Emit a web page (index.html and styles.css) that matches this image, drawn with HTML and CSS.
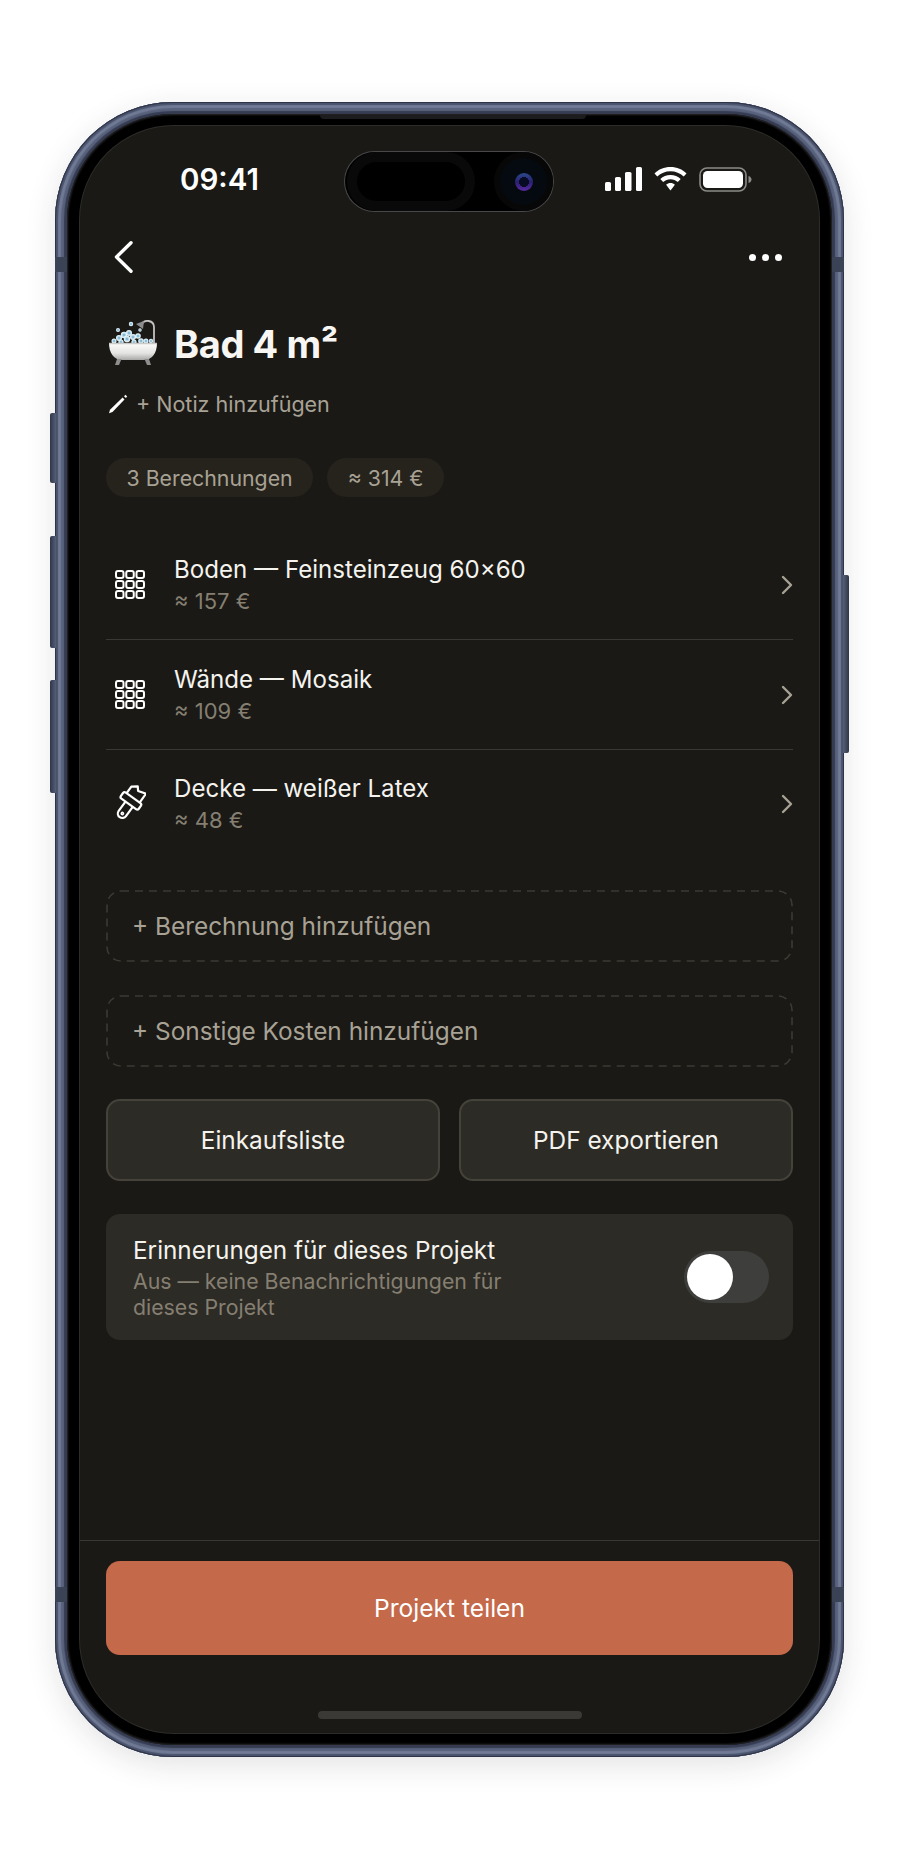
FILE: index.html
```html
<!DOCTYPE html>
<html lang="de">
<head>
<meta charset="utf-8">
<title>Bad 4 m²</title>
<link rel="stylesheet" href="styles.css">
</head>
<body>
<div class="phone">
  <span class="side side-l1"></span>
  <span class="side side-l2"></span>
  <span class="side side-l3"></span>
  <span class="side side-r1"></span>
  <span class="band band-tl"></span>
  <span class="band band-tr"></span>
  <span class="band band-bl"></span>
  <span class="band band-br"></span>
  <div class="bezel">
    <span class="lip"></span>
    <div class="screen">
      <div class="island">
        <span class="sensor"></span>
        <span class="lens-ring"><span class="lens"></span></span>
      </div>
      <div class="status">
        <span class="time">09:41</span>
        <div class="status-icons">
          <svg class="i-signal" width="37" height="24" viewBox="0 0 37 24"><rect x="0" y="15" width="6" height="9" rx="1.6"/><rect x="10" y="10" width="6" height="14" rx="1.6"/><rect x="20" y="5" width="6.500" height="19" rx="1.6"/><rect x="31" y="0" width="6" height="24" rx="1.6"/></svg>
          <svg class="i-wifi" width="33" height="24" viewBox="0 0 33 24"><path d="M16.5 0C10 0 4.700 2.400 0.500 6.400L3.300 9.500C6.800 6.200 11.400 4.200 16.500 4.200S26.200 6.200 29.700 9.500L32.500 6.400C28.300 2.400 23 0 16.500 0Z"/><path d="M16.500 8C12.500 8 9 9.500 6.300 12L9.200 15.100C11.100 13.300 13.700 12.200 16.500 12.200S21.900 13.300 23.800 15.100L26.700 12C24 9.500 20.500 8 16.500 8Z"/><path d="M16.500 16C14.800 16 13.300 16.600 12.100 17.700L16.500 23.500L20.900 17.700C19.700 16.600 18.200 16 16.500 16Z"/></svg>
          <svg class="i-batt" width="53" height="25" viewBox="0 0 53 25"><rect x="1" y="1" width="46" height="23" rx="7" fill="none" stroke="#8b8a87" stroke-width="1.600"/><rect x="4" y="4" width="40" height="17" rx="4.500" fill="#fff"/><path d="M49.500 9c2 .5 3 2 3 3.500s-1 3-3 3.500z" fill="#8b8a87"/></svg>
        </div>
      </div>
      <div class="nav">
        <svg class="back" width="20" height="32" viewBox="0 0 20 32"><path d="M17 1.800L2.500 16L17 30.200" fill="none" stroke="#fff" stroke-width="3.400" stroke-linecap="round" stroke-linejoin="round"/></svg>
        <div class="dots"><span></span><span></span><span></span></div>
      </div>
      <div class="title-row">
        <svg class="bath" width="50" height="48" viewBox="0 0 50 48">
          <defs>
            <linearGradient id="tub" x1="0" y1="0" x2="0" y2="1"><stop offset="0" stop-color="#fdfdfd"/><stop offset=".6" stop-color="#e4e4e2"/><stop offset="1" stop-color="#a8a8a6"/></linearGradient>
            <radialGradient id="bub"><stop offset="0" stop-color="#5f9fc0"/><stop offset=".6" stop-color="#c4e3f1"/><stop offset="1" stop-color="#f4fbff"/></radialGradient>
          </defs>
          <path d="M46 25V8c0-7-10-8-12-3" fill="none" stroke="#c2c2c2" stroke-width="1.800"/>
          <path d="M28 5l8-3-1 8z" fill="#8c8c8c"/>
          <g fill="url(#bub)">
            <circle cx="6" cy="22" r="2.500"/><circle cx="11" cy="19" r="3"/><circle cx="16" cy="16" r="3.200"/><circle cx="21" cy="14" r="3"/><circle cx="19" cy="20" r="3.200"/><circle cx="25" cy="18" r="3"/><circle cx="30" cy="17" r="2.800"/><circle cx="33" cy="22" r="2.800"/><circle cx="38" cy="22" r="2.500"/><circle cx="43" cy="22" r="2.200"/><circle cx="13" cy="23" r="2.600"/><circle cx="26" cy="23" r="2.600"/>
            <circle cx="23" cy="5" r="2.200"/><circle cx="10" cy="11" r="2"/><circle cx="32" cy="11" r="1.700"/>
          </g>
          <path d="M1 24H49C49 34 44 41 36 41H14C6 41 1 34 1 24Z" fill="url(#tub)"/>
          <path d="M1 24.500H49" stroke="#c9c9c7" stroke-width="1.600"/>
          <path d="M9 40l-2 6h4l2.500-6zM41 40l2 6h-4l-2.500-6z" fill="#8e8e8e"/>
        </svg>
        <h1>Bad 4 m²</h1>
      </div>
      <div class="note">
        <svg width="20" height="20" viewBox="0 0 20 20"><path d="M1 19.200L2 15.700L14.600 3.500L16.500 5.400L4.500 18Z" fill="#fff"/><path d="M16 2.200L17.500 .8L19.200 2.500L17.800 4Z" fill="#fff"/></svg>
        <span>+ Notiz hinzufügen</span>
      </div>
      <div class="chips">
        <span class="chip">3 Berechnungen</span>
        <span class="chip">≈ 314 €</span>
      </div>
      <ul class="list">
        <li class="row">
          <svg class="row-icon" width="30" height="30" viewBox="0 0 30 30"><use href="#tiles"/></svg>
          <div class="row-text"><div class="row-title">Boden — Feinsteinzeug 60×60</div><div class="row-sub">≈ 157 €</div></div>
          <svg class="chev" width="12" height="20" viewBox="0 0 12 20"><path d="M2 2l8 8-8 8" fill="none" stroke="#a8a295" stroke-width="2.400" stroke-linecap="round" stroke-linejoin="round"/></svg>
        </li>
        <li class="row">
          <svg class="row-icon" width="30" height="30" viewBox="0 0 30 30"><use href="#tiles"/></svg>
          <div class="row-text"><div class="row-title">Wände — Mosaik</div><div class="row-sub">≈ 109 €</div></div>
          <svg class="chev" width="12" height="20" viewBox="0 0 12 20"><path d="M2 2l8 8-8 8" fill="none" stroke="#a8a295" stroke-width="2.400" stroke-linecap="round" stroke-linejoin="round"/></svg>
        </li>
        <li class="row">
          <svg class="row-icon brush" width="36" height="38" viewBox="0 0 36 38"><g transform="translate(19 18.500) rotate(36)" fill="none" stroke="#fff" stroke-width="2.200" stroke-linejoin="round"><path d="M-8 -7V-15L-3 -19L0 -15.500L8 -18V-7"/><rect x="-11" y="-7" width="22" height="7.500" rx="2"/><path d="M-4 .5V12a4.500 4.500 0 0 0 9 0V.5"/><circle cx=".5" cy="12" r=".8"/></g></svg>
          <div class="row-text"><div class="row-title">Decke — weißer Latex</div><div class="row-sub">≈ 48 €</div></div>
          <svg class="chev" width="12" height="20" viewBox="0 0 12 20"><path d="M2 2l8 8-8 8" fill="none" stroke="#a8a295" stroke-width="2.400" stroke-linecap="round" stroke-linejoin="round"/></svg>
        </li>
      </ul>
      <div class="add add-first"><svg class="dash"><rect/></svg>+ Berechnung hinzufügen</div>
      <div class="add add-second"><svg class="dash"><rect/></svg>+ Sonstige Kosten hinzufügen</div>
      <div class="actions">
        <div class="action">Einkaufsliste</div>
        <div class="action">PDF exportieren</div>
      </div>
      <div class="card">
        <div class="card-text">
          <div class="card-title">Erinnerungen für dieses Projekt</div>
          <div class="card-sub">Aus — keine Benachrichtigungen für dieses Projekt</div>
        </div>
        <div class="toggle"><span class="knob"></span></div>
      </div>
      <div class="footer">
        <div class="cta">Projekt teilen</div>
        <div class="home"></div>
      </div>
    </div>
  </div>
</div>
<svg class="defs" width="0" height="0">
  <symbol id="tiles" viewBox="0 0 30 30">
    <g fill="none" stroke="#fff" stroke-width="2">
      <rect x="1" y="1" width="7.500" height="7" rx="2"/><rect x="11.250" y="1" width="7.500" height="7" rx="2"/><rect x="21.500" y="1" width="7.500" height="7" rx="2"/>
      <rect x="1" y="11" width="7.500" height="7" rx="2"/><rect x="11.250" y="11" width="7.500" height="7" rx="2"/><rect x="21.500" y="11" width="7.500" height="7" rx="2"/>
      <rect x="1" y="21" width="7.500" height="7" rx="2"/><rect x="11.250" y="21" width="7.500" height="7" rx="2"/><rect x="21.500" y="21" width="7.500" height="7" rx="2"/>
    </g>
  </symbol>
</svg>
</body>
</html>
```

FILE: styles.css
```css
* { box-sizing: border-box; }
html, body { margin: 0; padding: 0; background: #fff; }
body { width: 900px; height: 1860px; overflow: hidden; font-family: Inter, "Liberation Sans", sans-serif; color: #f5f3ee; }
.defs { display: block; }
ul { list-style: none; margin: 0; padding: 0; }

.phone {
  position: relative;
  width: 789px;
  height: 1655px;
  margin: 102px 0 0 55px;
  padding: 12px;
  border-radius: 118px;
  background: #353c52;
  box-shadow:
    inset 0 0 0 1px #2e3447,
    inset 0 0 1px 3px #4a536c,
    inset 0 0 1px 6px #717b95,
    inset 0 0 1px 9px #59627c,
    0 8px 30px rgba(40, 40, 50, .13);
}
.side { position: absolute; background: linear-gradient(90deg, #2f3648, #565f78); }
.side-l1 { left: -5px; top: 311px; width: 6px; height: 70px; border-radius: 2px 0 0 2px; }
.side-l2 { left: -5px; top: 434px; width: 6px; height: 112px; border-radius: 2px 0 0 2px; }
.side-l3 { left: -5px; top: 578px; width: 6px; height: 113px; border-radius: 2px 0 0 2px; }
.side-r1 { right: -5px; top: 473px; width: 6px; height: 178px; border-radius: 0 2px 2px 0; background: linear-gradient(90deg, #565f78, #2f3648); }
.band { position: absolute; width: 12px; height: 15px; background: #3a4256; }
.band-tl { left: 0; top: 155px; }
.band-tr { right: 0; top: 155px; }
.band-bl { left: 0; top: 1485px; }
.band-br { right: 0; top: 1485px; }

.bezel {
  position: relative;
  width: 765px;
  height: 1631px;
  padding: 12px 13px;
  border-radius: 106px;
  background: #000;
  box-shadow: inset 0 0 2px 1px #2a2a2c;
}
.lip {
  position: absolute;
  left: 253px;
  top: 1px;
  width: 266px;
  height: 4px;
  border-radius: 0 0 8px 8px;
  background: #1c1c1e;
}
.screen {
  position: relative;
  display: flex;
  flex-direction: column;
  width: 739px;
  height: 1607px;
  border-radius: 94px;
  background: #1a1915;
  box-shadow: 0 0 0 1px #2c2c2a;
  overflow: hidden;
}
.island {
  position: absolute;
  left: 265px;
  top: 26px;
  display: flex;
  align-items: center;
  justify-content: flex-end;
  width: 208px;
  height: 59px;
  border-radius: 30px;
  background: #000;
  box-shadow: 0 0 0 1px #48484a;
}
.sensor {
  position: absolute;
  left: 2px;
  top: 0;
  width: 128px;
  height: 59px;
  border-radius: 30px;
  border: 10px solid #090909;
  background: #000;
}
.lens-ring {
  display: flex;
  align-items: center;
  justify-content: center;
  width: 59px;
  height: 59px;
  border-radius: 50%;
  background: radial-gradient(circle, #050a10 0 55%, #070707 56% 100%);
}
.lens {
  width: 18px;
  height: 18px;
  border-radius: 50%;
  background:
    radial-gradient(circle, #080b24 0 38%, transparent 40%),
    linear-gradient(#2a4a8a, #2a2070 50%, #5a2aa0);
}

.status {
  display: flex;
  align-items: center;
  justify-content: space-between;
  height: 96px;
  padding: 22px 67px 12px 100px;
  flex: none;
}
.time { font-size: 29.500px; font-weight: 600; line-height: 32px; color: #fff; }
.status-icons { display: flex; align-items: center; gap: 12px; }
.status-icons svg { display: block; fill: #fff; }

.nav {
  display: flex;
  align-items: center;
  justify-content: space-between;
  flex: none;
  height: 70px;
  padding: 0 37px 0 34px;
}
.dots { display: flex; gap: 6px; }
.dots span { width: 7px; height: 7px; border-radius: 50%; background: #fff; }

.title-row {
  display: flex;
  align-items: center;
  flex: none;
  gap: 16px;
  height: 60px;
  margin: 21px 26px 0 28px;
}
.bath { flex: none; }
h1 { margin: 2px 0 0; font-size: 38px; font-weight: 700; line-height: 44px; letter-spacing: -.4px; color: #f8f6f2; }
.note {
  display: flex;
  align-items: center;
  flex: none;
  gap: 8px;
  height: 30px;
  margin: 16px 26px 0 28px;
  font-size: 21.500px;
  color: #a8a295;
}
.chips { display: flex; flex: none; gap: 14px; margin: 39px 26px 0; }
.chip {
  display: flex;
  align-items: center;
  height: 39px;
  padding: 0 20.500px;
  border-radius: 20px;
  background: #26231c;
  font-size: 21.300px;
  color: #a8a295;
}
.list { flex: none; margin: 33px 26px 0; }
.row {
  display: flex;
  align-items: center;
  height: 110px;
  border-bottom: 1px solid #3a3832;
}
.row:last-child { height: 108px; border-bottom-color: transparent; }
.row-icon { flex: none; width: 30px; height: 30px; margin: 0 29px 0 9px; }
.row-icon.brush { width: 36px; height: 38px; margin: 0 28px 0 4px; }
.row-text { flex: 1; }
.row-title { font-size: 24.100px; line-height: 30px; color: #f5f3ee; }
.row-sub { margin-top: 3px; font-size: 22px; line-height: 26px; color: #857f72; }
.chev { flex: none; }

.add {
  position: relative;
  display: flex;
  align-items: center;
  flex: none;
  height: 72px;
  margin: 0 26px;
  padding: 0 26px;
  font-size: 24.400px;
  color: #a8a295;
}
.dash { position: absolute; left: 0; top: 0; width: 100%; height: 100%; overflow: visible; }
.dash rect {
  x: 1px;
  y: 1px;
  width: calc(100% - 2px);
  height: calc(100% - 2px);
  rx: 14px;
  fill: none;
  stroke: #3c3a33;
  stroke-width: 1.600px;
  stroke-dasharray: 8 6;
}
.add-first { margin-top: 32px; }
.add-second { margin-top: 33px; }
.actions { display: flex; flex: none; gap: 19px; margin: 32px 26px 0; }
.action {
  display: flex;
  align-items: center;
  justify-content: center;
  flex: 1;
  height: 82px;
  border: 2px solid #45423a;
  border-radius: 14px;
  background: #2d2b25;
  font-size: 24.400px;
  color: #f5f3ee;
}
.card {
  display: flex;
  align-items: center;
  justify-content: space-between;
  flex: none;
  height: 126px;
  margin: 33px 26px 0;
  padding: 0 24px 0 27px;
  border-radius: 14px;
  background: #2d2b25;
}
.card-text { width: 400px; }
.card-title { font-size: 24.300px; line-height: 30px; color: #f5f3ee; }
.card-sub { margin-top: 3px; font-size: 21.300px; line-height: 26px; color: #857f72; }
.toggle {
  display: flex;
  align-items: center;
  width: 85px;
  height: 52px;
  padding: 3px;
  border-radius: 26px;
  background: #3e3e3c;
}
.knob { width: 46px; height: 46px; border-radius: 50%; background: #fff; }

.footer {
  display: flex;
  flex-direction: column;
  align-items: center;
  margin-top: auto;
  height: 193px;
  padding: 20px 26px 0;
  border-top: 1px solid #3a3832;
}
.cta {
  display: flex;
  align-items: center;
  justify-content: center;
  width: 100%;
  height: 94px;
  flex: none;
  border-radius: 14px;
  background: #c4694a;
  font-size: 24.600px;
  color: #fff;
}
.home { width: 264px; height: 8px; margin-top: 56px; flex: none; border-radius: 4px; background: #3a3935; }
```
